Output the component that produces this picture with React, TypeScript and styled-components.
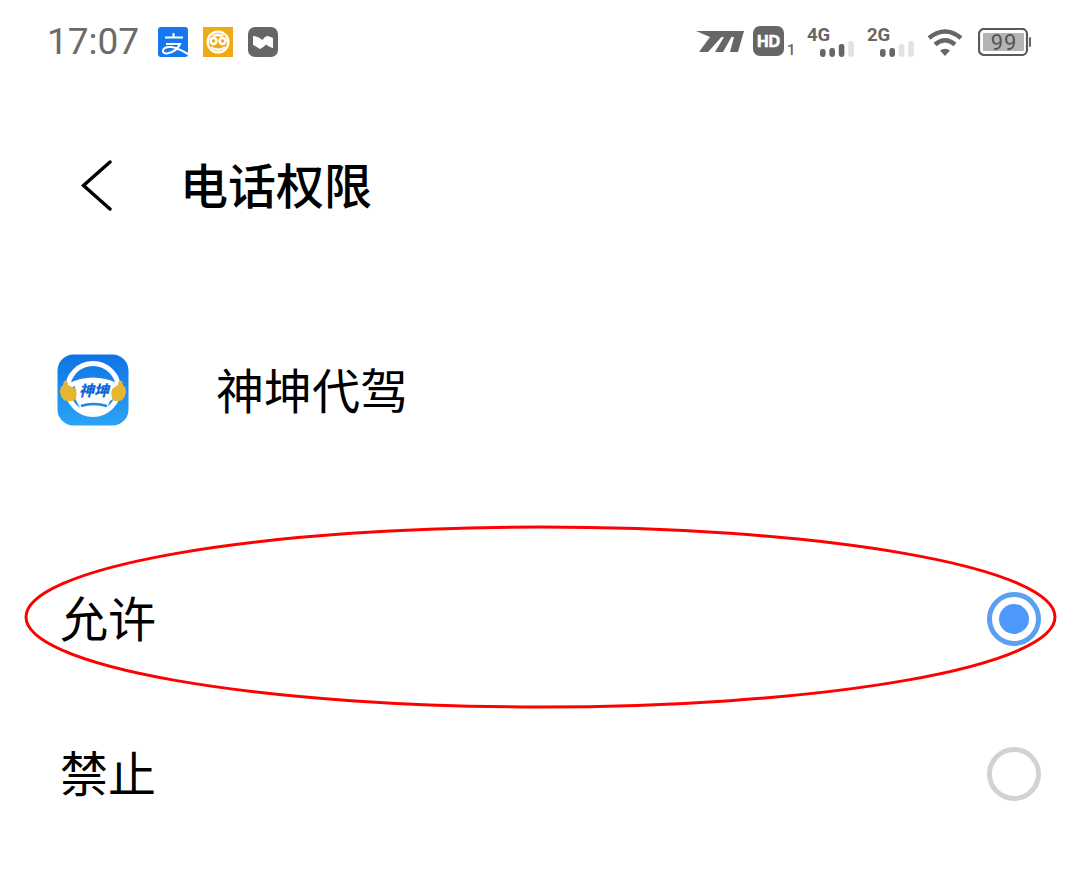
import React from "react";
import styled, { createGlobalStyle } from "styled-components";

const Global = createGlobalStyle`
  html, body { margin: 0; padding: 0; background: #fff; }
  body { font-family: "Roboto", "Noto Sans CJK SC", sans-serif; overflow: hidden; }
`;

const Page = styled.div`
  position: relative;
  width: 1080px;
  height: 891px;
  background: #fff;
  overflow: hidden;
`;

const StatusBar = styled.div`
  height: 84px;
  display: flex;
  align-items: center;
  justify-content: space-between;
  padding: 0 48px 0 47px;
  box-sizing: border-box;
`;

const StatusLeft = styled.div`
  display: flex;
  align-items: center;
`;

const Clock = styled.span`
  font: 400 37px/44px "Roboto", sans-serif;
  color: #6a6a6a;
  width: 111px;
`;

const Notifs = styled.div`
  display: flex;
  gap: 15px;
`;

const StatusRight = styled.div`
  display: flex;
  align-items: center;
  height: 44px;
`;

const Spacer = styled.span`
  width: 10px;
`;

const Header = styled.header`
  height: 270px;
  display: flex;
  align-items: flex-start;
  padding: 73px 0 0 80px;
  box-sizing: border-box;
`;

const BackButton = styled.span`
  width: 103px;
  height: 52px;
  margin-top: 3px;
  display: block;
`;

const Title = styled.h1`
  margin: 0 0 0 -3px;
  font: 500 48px/52px "Noto Sans CJK SC", sans-serif;
  color: #000;
`;

const AppRow = styled.div`
  display: flex;
  align-items: center;
  height: 72px;
  padding-left: 57px;
`;

const AppName = styled.span`
  position: relative;
  top: -2px;
  margin-left: 87px;
  font: 400 48px/72px "Noto Sans CJK SC", sans-serif;
  color: #000;
`;

const Options = styled.div`
  margin-top: 153px;
  display: flex;
  flex-direction: column;
  gap: 75px;
`;

const Option = styled.div`
  height: 80px;
  display: flex;
  align-items: center;
  justify-content: space-between;
  padding: 0 39px 0 60px;
`;

const OptionLabel = styled.span`
  font: 400 48px/80px "Noto Sans CJK SC", sans-serif;
  color: #000;
  position: relative;
  top: -3px;
`;

const Radio = styled.span<{ $on?: boolean }>`
  width: 54px;
  height: 54px;
  box-sizing: border-box;
  border-radius: 50%;
  border: 5px solid ${(p) => (p.$on ? "#5a9ff0" : "#d2d2d2")};
  display: flex;
  align-items: center;
  justify-content: center;
  &::after {
    content: "";
    display: ${(p) => (p.$on ? "block" : "none")};
    width: 30px;
    height: 30px;
    border-radius: 50%;
    background: #4f98fb;
  }
`;

const Annotation = styled.svg`
  position: absolute;
  left: 0;
  top: 0;
  pointer-events: none;
`;

const Alipay = () => (
  <svg width="30" height="30" viewBox="0 0 30 30">
    <rect width="30" height="30" rx="3" fill="#1677ee" />
    <path d="M7 10.5H25M15.5 6V10.5M8 17H22Q18.5 25 9 26.5Q4.5 26.5 5 23.5Q6 19.5 13 20Q19 20.5 30 27" fill="none" stroke="#fff" strokeWidth="2.1" />
  </svg>
);

const Monkey = () => (
  <svg width="30" height="30" viewBox="0 0 30 30">
    <rect width="30" height="30" fill="#f2aa14" />
    <circle cx="15" cy="15" r="11.5" fill="#fff" />
    <circle cx="15" cy="15" r="9.2" fill="#f2aa14" />
    <path d="M9 8.2Q15 5 21 8.2L19 10Q15 8.5 11 10Z" fill="#fff" />
    <circle cx="10.5" cy="14" r="4.2" fill="#fff" />
    <circle cx="19.5" cy="14" r="4.2" fill="#fff" />
    <circle cx="10.5" cy="14" r="1.7" fill="#f2aa14" />
    <circle cx="19.5" cy="14" r="1.7" fill="#f2aa14" />
    <path d="M8 20Q15 25.5 22 20" stroke="#fff" strokeWidth="2.2" fill="none" />
  </svg>
);

const Wave = () => (
  <svg width="30" height="30" viewBox="0 0 30 30">
    <rect width="30" height="30" rx="7" fill="#666" />
    <path d="M5 9Q10 9 14.5 13Q17 9 20 9L25 11V21Q21 20 18 17.5Q15 21 12 22Q8 19 5 18Z" fill="#fff" />
  </svg>
);

const Speed = () => (
  <svg width="48" height="22" viewBox="0 0 48 22" style={{ marginRight: 9 }}>
    <path d="M0 0H48L42 21H34L38 6H35.5L27 21H19L28 6H25.5L12 21H3L14 6Z" fill="#666" />
  </svg>
);

const HD = () => (
  <svg width="44" height="32" viewBox="0 0 44 32">
    <rect width="31" height="30" rx="7" fill="#666" />
    <text x="15.5" y="21" textAnchor="middle" fontFamily="Liberation Sans" fontWeight="700" fontSize="16" stroke="#fff" strokeWidth="0.6" fill="#fff">HD</text>
    <text x="34" y="29" fontFamily="Roboto" fontWeight="500" fontSize="15" fill="#666">1</text>
  </svg>
);

const Signal = ({ label, on }: { label: string; on: number }) => (
  <svg width="49" height="44" viewBox="0 0 49 44" style={{ marginRight: 11 }}>
    <text x="0" y="20.5" fontFamily="Roboto" fontWeight="700" fontSize="18.5" fill="#666">{label}</text>
    {[0, 1, 2, 3].map((i) => (
      <rect
        key={i}
        x={13 + i * 9.4}
        y={i < 2 ? 29 - i * 1 : 24 - (i - 2) * 3}
        width="5.6"
        height={i < 2 ? 8 + i : 13 + (i - 2) * 3}
        rx="2.4"
        fill={i < on ? "#666" : "#e2e2e2"}
      />
    ))}
  </svg>
);

const Wifi = () => (
  <svg width="36" height="30" viewBox="0 0 36 30" style={{ marginRight: 15 }}>
    <path d="M2 11Q18 -2 34 11" fill="none" stroke="#666" strokeWidth="4.4" />
    <path d="M8 17.5Q18 9 28 17.5" fill="none" stroke="#666" strokeWidth="4.4" />
    <path d="M13 23.5Q18 20 23 23.5L18 29Z" fill="#666" />
  </svg>
);

const Battery = () => (
  <svg width="54" height="28" viewBox="0 0 54 28">
    <rect x="1" y="1" width="48" height="26" rx="5" fill="#fff" stroke="#5a5a5a" strokeWidth="2.2" />
    <rect x="5" y="5" width="41" height="18" rx="1" fill="#b4b4b4" />
    <rect x="51" y="9" width="2" height="10" rx="1" fill="#666" />
    <text x="26" y="21.5" textAnchor="middle" fontFamily="Roboto" fontSize="22" letterSpacing="1" fill="#555">99</text>
  </svg>
);

const AppIcon = () => (
  <svg width="72" height="72" viewBox="0 0 72 72">
    <defs>
      <linearGradient id="ai" x1="0" y1="0" x2="0" y2="1">
        <stop offset="0" stopColor="#0f72e6" />
        <stop offset="1" stopColor="#2aa5f5" />
      </linearGradient>
    </defs>
    <rect x="0.5" y="0.5" width="71" height="71" rx="16" fill="url(#ai)" />
    <circle cx="36" cy="35" r="25.5" fill="none" stroke="#fff" strokeWidth="5" />
    <path d="M12 32Q36 20 60 32" stroke="#fff" strokeWidth="5" fill="none" />
    <rect x="18" y="26" width="40" height="21" rx="7" fill="#fff" />
    <path d="M18 44H54L48 60H26Z" fill="#fff" />
    <path d="M24 52Q36 48 50 52" stroke="#1c86ea" strokeWidth="2.4" fill="none" />
    <text x="37" y="42" textAnchor="middle" fontFamily="Noto Sans CJK SC" fontWeight="900" fontSize="15" fontStyle="italic" fill="#1268d8">神坤</text>
    <path d="M3 38Q3 33 6 31L7 27Q11 26 11 31L19 35Q21 42 17 47H9Q4 45 3 38Z" fill="#e8b530" />
    <path d="M69 38Q69 33 66 31L65 27Q61 26 61 31L55 35Q53 42 57 47H63Q68 45 69 38Z" fill="#e8b530" />
  </svg>
);

const Back = () => (
  <svg width="34" height="52" viewBox="0 0 34 52">
    <path d="M30 2L3.5 25.5L30 49" fill="none" stroke="#000" strokeWidth="3.4" strokeLinecap="round" />
  </svg>
);

export default function App() {
  return (
    <Page>
      <Global />
      <StatusBar>
        <StatusLeft>
          <Clock>17:07</Clock>
          <Notifs>
            <Alipay />
            <Monkey />
            <Wave />
          </Notifs>
        </StatusLeft>
        <StatusRight>
          <Speed />
          <HD />
          <Spacer />
          <Signal label="4G" on={3} />
          <Signal label="2G" on={2} />
          <Wifi />
          <Battery />
        </StatusRight>
      </StatusBar>
      <Header>
        <BackButton>
          <Back />
        </BackButton>
        <Title>电话权限</Title>
      </Header>
      <AppRow>
        <AppIcon />
        <AppName>神坤代驾</AppName>
      </AppRow>
      <Options>
        <Option>
          <OptionLabel>允许</OptionLabel>
          <Radio $on />
        </Option>
        <Option>
          <OptionLabel>禁止</OptionLabel>
          <Radio />
        </Option>
      </Options>
      <Annotation width="1080" height="891" viewBox="0 0 1080 891">
        <ellipse cx="540.5" cy="617" rx="514.5" ry="90" fill="none" stroke="#f00" strokeWidth="3" />
      </Annotation>
    </Page>
  );
}
